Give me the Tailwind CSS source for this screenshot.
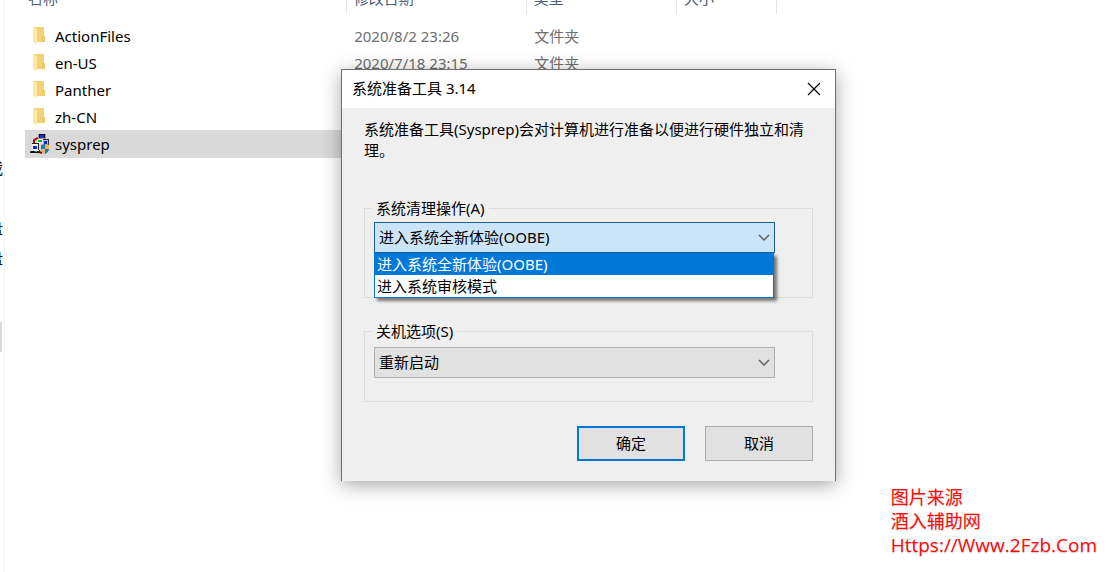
<!DOCTYPE html>
<html lang="zh-CN">
<head>
  <meta charset="UTF-8" />
  <meta name="viewport" content="width=device-width, initial-scale=1.0" />
  <title>Sysprep</title>
  <script src="https://cdn.jsdelivr.net/npm/@tailwindcss/browser@4"></script>
</head>

<body class="relative flex h-screen overflow-hidden bg-white font-['Noto_Sans','Noto_Sans_CJK_SC',sans-serif] text-[15px] leading-5 text-black">
  <svg class="hidden">
    <symbol id="folder" viewBox="0 0 20 20">
      <path d="M4 1h10v15H4z" fill="#f3d277" />
      <path d="M12 10h3v6h-3z" fill="#edc968" />
      <path d="M3 1l4 2v15l-4-2z" fill="#ffe8a6" />
    </symbol>
    <symbol id="chevron" viewBox="0 0 12 8">
      <path d="M1 1l5 5 5-5" fill="none" stroke="#606060" stroke-width="1.5" />
    </symbol>
  </svg>

  <!-- navigation pane, scrolled almost out of view -->
  <nav class="flex w-[5px] shrink-0 flex-col items-start overflow-hidden border-r border-gray-100 pt-[158px]">
    <div class="flex w-[3px] justify-end"><a href="#" class="whitespace-nowrap">下载</a></div>
    <div class="mt-10 flex w-[3px] justify-end"><a href="#" class="whitespace-nowrap">磁盘</a></div>
    <div class="mt-[10px] flex w-[3px] justify-end"><a href="#" class="whitespace-nowrap">磁盘</a></div>
    <div class="mt-[54px] h-[30px] w-[2px] bg-[#d9d9d9]"></div>
  </nav>

  <main class="min-w-0 flex-1 pl-5">
    <table class="-mt-[17px] w-[752px] table-fixed border-collapse text-left">
      <thead>
        <tr class="h-[31px] text-[#4c607a]">
          <th class="w-[321px] border-r border-[#e5e5e5] pb-[2px] pl-[3px] font-normal">名称</th>
          <th class="w-[180px] border-r border-[#e5e5e5] pb-[2px] pl-[7px] font-normal">修改日期</th>
          <th class="w-[150px] border-r border-[#e5e5e5] pb-[2px] pl-[7px] font-normal">类型</th>
          <th class="w-[100px] border-r border-[#e5e5e5] pb-[2px] pl-[7px] font-normal">大小</th>
        </tr>
      </thead>
      <tbody class="text-[#6d6d6d] before:block before:h-2">
        <tr class="h-[27px]">
          <td class="pl-[5px]"><div class="flex items-center gap-[5px] text-black"><svg class="size-5"><use href="#folder" /></svg>ActionFiles</div></td>
          <td class="pl-2">2020/8/2 23:26</td>
          <td class="pl-2">文件夹</td>
          <td></td>
        </tr>
        <tr class="h-[27px]">
          <td class="pl-[5px]"><div class="flex items-center gap-[5px] text-black"><svg class="size-5"><use href="#folder" /></svg>en-US</div></td>
          <td class="pl-2">2020/7/18 23:15</td>
          <td class="pl-2">文件夹</td>
          <td></td>
        </tr>
        <tr class="h-[27px]">
          <td class="pl-[5px]"><div class="flex items-center gap-[5px] text-black"><svg class="size-5"><use href="#folder" /></svg>Panther</div></td>
          <td></td>
          <td></td>
          <td></td>
        </tr>
        <tr class="h-[27px]">
          <td class="pl-[5px]"><div class="flex items-center gap-[5px] text-black"><svg class="size-5"><use href="#folder" /></svg>zh-CN</div></td>
          <td></td>
          <td></td>
          <td></td>
        </tr>
        <tr class="h-7 bg-[#d9d9d9]">
          <td class="pl-[5px]">
            <div class="flex items-center gap-[5px] text-black">
              <svg class="size-5" viewBox="0 0 20 20">
                <path d="M4 10V6l4-2" fill="none" stroke="#a01010" stroke-width="2" />
                <path d="M9 18l3 1" fill="none" stroke="#8b0000" stroke-width="2" />
                <path d="M8 0h8v5H8z" fill="#999" /><path d="M9 0h6v4H9z" fill="#111" /><path d="M10 1h4v3h-4z" fill="#2030e0" />
                <path d="M7 5h8v4H7z" fill="#f4f4f4" /><path d="M8 6h4v2H8z" fill="#10c010" />
                <path d="M13 5h6v10h-6z" fill="#333" /><path d="M13 6h5v7h-5z" fill="#bbb" /><path d="M14 7h3v4h-3z" fill="#1020e0" />
                <path d="M2 9h7v8H2z" fill="#222" /><path d="M2 10h6v6H2z" fill="#f4f4f4" /><path d="M3 12h4v3H3z" fill="#1020e0" />
                <path d="M1 16h9l-1 3H0z" fill="#111" /><path d="M1 16h8v1H1z" fill="#f4f4f4" /><path d="M5 17h2v1H5z" fill="#10c010" />
                <path d="M11 11l4-1 4 1v4c0 2-2 4-4 5-2-1-4-3-4-5z" fill="#1b74c4" />
                <path d="M15 10l4 1v4h-4zM11 15h4v5c-2-1-4-3-4-5z" fill="#f0b64a" />
              </svg>
              sysprep
            </div>
          </td>
          <td></td>
          <td></td>
          <td></td>
        </tr>
      </tbody>
    </table>
  </main>

  <section role="dialog" aria-labelledby="dialog-title" class="absolute top-[69px] left-[341px] w-[495px] border border-b-0 border-[#6e6e6e] bg-[#efefef] shadow-[0_4px_18px_rgba(0,0,0,0.35)]">
    <header class="flex h-[38px] items-center justify-between bg-white pr-[14px] pl-[10px]">
      <h1 id="dialog-title" class="pb-[2px]">系统准备工具 3.14</h1>
      <button type="button" aria-label="关闭" class="size-[14px]">
        <svg class="size-full" viewBox="0 0 14 14"><path d="M1 1l12 12M13 1L1 13" stroke="#000" stroke-width="1.2" /></svg>
      </button>
    </header>

    <form class="px-[22px] pt-[11px] pb-5">
      <p class="h-[89px] leading-[21px]">系统准备工具(Sysprep)会对计算机进行准备以便进行硬件独立和清理。</p>

      <div class="relative h-[90px] border border-[#dcdcdc] px-[9px] pt-[13px]">
        <label for="cleanup" class="absolute -top-[11px] left-[7px] bg-[#efefef] px-1">系统清理操作(A)</label>
        <div class="relative w-[401px]">
          <select id="cleanup" class="block h-[31px] w-full appearance-none border border-[#16609e] bg-[#cce4f7] px-1 pb-[2px]">
            <option>进入系统全新体验(OOBE)</option>
          </select>
          <svg class="pointer-events-none absolute top-3 right-[5px] h-2 w-3"><use href="#chevron" /></svg>
          <ul role="listbox" class="absolute top-[31px] left-0 w-[400px] border border-t-0 border-[#0078d7] bg-white leading-[22px] shadow-[3px_3px_3px_rgba(0,0,0,0.5)]">
            <li role="option" aria-selected="true" class="bg-[#0078d7] px-[2px] text-white">进入系统全新体验(OOBE)</li>
            <li role="option" class="px-[2px]">进入系统审核模式</li>
          </ul>
        </div>
      </div>

      <div class="relative mt-[33px] h-[71px] border border-[#dcdcdc] px-[9px] pt-[15px]">
        <label for="shutdown" class="absolute -top-[11px] left-[7px] bg-[#efefef] px-1">关机选项(S)</label>
        <div class="relative w-[401px]">
          <select id="shutdown" class="block h-[31px] w-full appearance-none border border-[#b0b0b0] bg-[#e1e1e1] px-1 pb-[2px]">
            <option>重新启动</option>
          </select>
          <svg class="pointer-events-none absolute top-3 right-[5px] h-2 w-3"><use href="#chevron" /></svg>
        </div>
      </div>

      <div class="mt-6 flex justify-end gap-5">
        <button type="submit" class="h-[35px] w-[108px] border-2 border-[#0078d7] bg-[#e1e1e1] pb-[2px]">确定</button>
        <button type="button" class="h-[35px] w-[108px] border border-[#adadad] bg-[#e1e1e1] pb-[2px]">取消</button>
      </div>
    </form>
  </section>

  <div class="absolute right-4 bottom-[15px] font-['Open_Sans','Noto_Sans_CJK_SC',sans-serif] text-lg leading-6 text-[#ff0a0a] text-shadow-sm">
    <p>图片来源</p>
    <p>酒入辅助网</p>
    <p class="text-[19px] leading-6">Https://Www.2Fzb.Com</p>
  </div>
</body>
</html>
